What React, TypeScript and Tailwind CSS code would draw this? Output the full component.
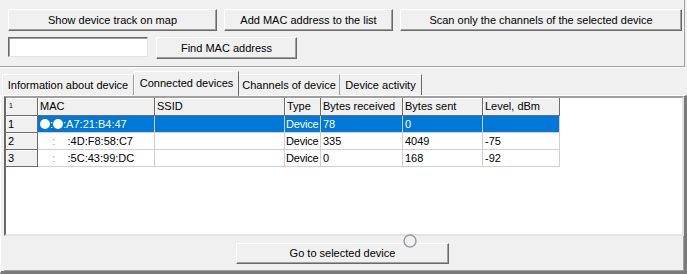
import React from 'react';

// Botón estilo Windows clásico (3D)
const btn =
  'bg-[#f0f0f0] border border-t-white border-l-white border-r-[#696969] border-b-[#696969] shadow-[inset_-1px_-1px_0_#a0a0a0] flex items-center justify-center text-black';

const COLS = ['w-[32px]', 'w-[117px]', 'w-[130px]', 'w-[36px]', 'w-[82px]', 'w-[80px]', 'w-[77px]'];
const HEADERS = ['', 'MAC', 'SSID', 'Type', 'Bytes received', 'Bytes sent', 'Level, dBm'];

const fixedCell =
  'bg-[#f0f0f0] border-r border-b border-[#6b6b6b] shadow-[inset_1px_1px_0_#fff] px-[2px] flex items-center whitespace-nowrap overflow-hidden';
const dataCell = 'border-r border-b border-[#d0d0d0] flex items-center whitespace-nowrap overflow-hidden';

function Hidden({ children }: { children: string }) {
  return <span className="text-transparent">{children}</span>;
}

function Blob() {
  return <span className="inline-block w-[10px] h-[10px] rounded-full bg-white" />;
}

const rows: { n: string; mac: React.ReactNode; type: string; rx: string; tx: string; lvl: string; sel?: boolean }[] = [
  {
    n: '1',
    mac: (
      <span className="flex items-center">
        <Blob />:<Blob />:A7:21:B4:47
      </span>
    ),
    type: 'Device',
    rx: '78',
    tx: '0',
    lvl: '',
    sel: true,
  },
  {
    n: '2',
    mac: (
      <span>
        <Hidden>00</Hidden>
        <span className="text-[#9a9a9a]">:</span>
        <Hidden>00</Hidden>:4D:F8:58:C7
      </span>
    ),
    type: 'Device',
    rx: '335',
    tx: '4049',
    lvl: '-75',
  },
  {
    n: '3',
    mac: (
      <span>
        <Hidden>00</Hidden>
        <span className="text-[#9a9a9a]">:</span>
        <Hidden>00</Hidden>:5C:43:99:DC
      </span>
    ),
    type: 'Device',
    rx: '0',
    tx: '168',
    lvl: '-92',
  },
];

export default function App() {
  return (
    <div className="w-[687px] h-[274px] bg-[#f0f0f0] flex flex-col overflow-hidden relative font-['Liberation_Sans',Arial,sans-serif] text-[11px] text-black leading-none">
      {/* Panel superior con botones */}
      <div className="h-[67px] w-[685px] border-r border-b border-[#a0a0a0] pl-[8px] pt-[9px] flex flex-col gap-[6px] shrink-0">
        <div className="flex gap-[7px]">
          <button className={`${btn} w-[209px] h-[22px]`}>Show device track on map</button>
          <button className={`${btn} w-[169px] h-[22px]`}>Add MAC address to the list</button>
          <button className={`${btn} w-[282px] h-[22px]`}>Scan only the channels of the selected device</button>
        </div>
        <div className="flex gap-[8px]">
          <input className="w-[140px] h-[20px] bg-white border border-t-[#696969] border-l-[#696969] border-r-[#e3e3e3] border-b-[#e3e3e3] shadow-[inset_1px_1px_0_#a0a0a0] outline-none" />
          <button className={`${btn} w-[141px] h-[22px]`}>Find MAC address</button>
        </div>
      </div>
      <div className="h-px w-[685px] bg-white shrink-0" />

      {/* Pestañas */}
      <div className="h-[27px] flex items-end pl-[2px] shrink-0">
        <div className="w-[132px] h-[21px] border-t border-l border-white border-r border-r-[#a0a0a0] flex items-center justify-center pt-[1px]">
          Information about device
        </div>
        <div className="relative z-10 w-[105px] h-[25px] -mb-px bg-[#f0f0f0] border-t border-l border-white border-r border-r-[#696969] flex items-start justify-center pt-[6px]">
          Connected devices
        </div>
        <div className="w-[101px] h-[21px] border-t border-white border-r border-r-[#a0a0a0] flex items-center justify-center pt-[1px]">
          Channels of device
        </div>
        <div className="w-[82px] h-[21px] border-t border-white border-r border-r-[#696969] flex items-center justify-center pt-[1px]">
          Device activity
        </div>
      </div>

      {/* Contenido de la pestaña */}
      <div className="flex-1 flex flex-col border-t border-l border-white border-r-[3px] border-b-[3px] border-r-[#7a7a7a] border-b-[#7a7a7a] pl-[3px]">
        <div className="h-[140px] w-[680px] bg-white border-2 border-t-[#a0a0a0] border-l-[#696969] border-r-[#e3e3e3] border-b-[#e3e3e3] shrink-0">
          <div className="flex h-[18px]">
            {HEADERS.map((h, i) => (
              <div key={i} className={`${fixedCell} ${COLS[i]}`}>
                {i === 0 ? <span className="text-[7px] pl-[1px] pb-[3px]">1</span> : h}
              </div>
            ))}
          </div>
          {rows.map((r) => {
            const cells = [r.mac, '', r.type, r.rx, r.tx, r.lvl];
            return (
              <div key={r.n} className="flex h-[17px]">
                <div className={`${fixedCell} ${COLS[0]}`}>{r.n}</div>
                {cells.map((c, i) => (
                  <div
                    key={i}
                    className={`${dataCell} ${COLS[i + 1]} ${i === 2 ? 'pl-[1px] tracking-[-0.2px]' : 'px-[2px]'} ${
                      r.sel ? 'bg-[#0078d7] text-white' : ''
                    }`}
                  >
                    {c}
                  </div>
                ))}
              </div>
            );
          })}
        </div>
        <div className="flex-1 border-r border-b border-[#a0a0a0] flex justify-center pt-[7px] pr-[2px]">
          <button className={`${btn} w-[213px] h-[21px]`}>Go to selected device</button>
        </div>
      </div>

      {/* Indicador circular superpuesto */}
      <svg className="absolute left-[403px] top-[234px]" width="14" height="14" viewBox="0 0 14 14">
        <circle cx="7" cy="7" r="6" fill="none" stroke="#9c9ca4" strokeWidth="1.5" />
      </svg>
    </div>
  );
}
